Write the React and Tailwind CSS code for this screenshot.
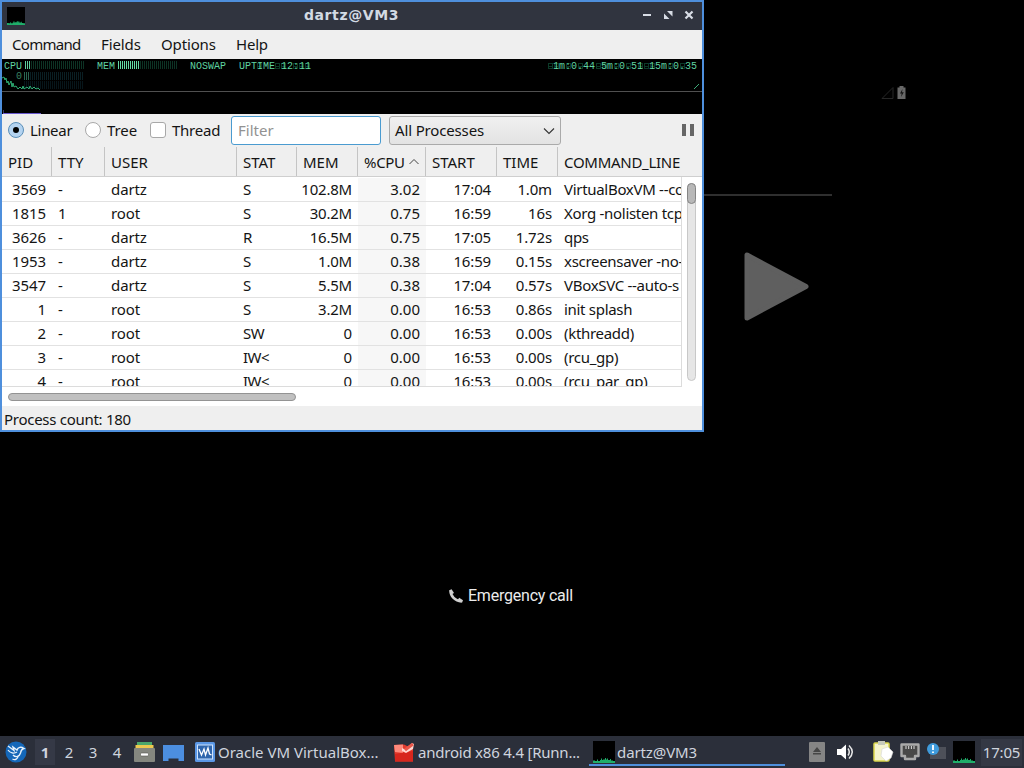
import clsx from 'clsx';

const columns = [
  { key: 'pid', label: 'PID', width: 'w-[50px]', align: 'text-right pr-[6px] tracking-[-0.05px]' },
  { key: 'tty', label: 'TTY', width: 'w-[53px]', align: 'pl-1.5' },
  { key: 'user', label: 'USER', width: 'w-[132px]', align: 'pl-1.5 tracking-[-0.1px]' },
  { key: 'stat', label: 'STAT', width: 'w-[60px]', align: 'pl-1.5 tracking-[-0.5px]' },
  { key: 'mem', label: 'MEM', width: 'w-[61px]', align: 'text-right pr-[6px] tracking-[-0.2px]' },
  { key: 'cpu', label: '%CPU', width: 'w-[68px]', align: 'text-right pr-[6px] bg-[#f7f7f7]' },
  { key: 'start', label: 'START', width: 'w-[71px]', align: 'text-right pr-[6px] tracking-[-0.15px]' },
  { key: 'time', label: 'TIME', width: 'w-[61px]', align: 'text-right pr-[6px] tracking-[-0.15px]' },
  { key: 'cmd', label: 'COMMAND_LINE', width: 'w-[124px]', align: 'pl-1.5 tracking-[-0.3px]' },
];

const processes = [
  { pid: '3569', tty: '-', user: 'dartz', stat: 'S', mem: '102.8M', cpu: '3.02', start: '17:04', time: '1.0m', cmd: 'VirtualBoxVM --co' },
  { pid: '1815', tty: '1', user: 'root', stat: 'S', mem: '30.2M', cpu: '0.75', start: '16:59', time: '16s', cmd: 'Xorg -nolisten tcp' },
  { pid: '3626', tty: '-', user: 'dartz', stat: 'R', mem: '16.5M', cpu: '0.75', start: '17:05', time: '1.72s', cmd: 'qps' },
  { pid: '1953', tty: '-', user: 'dartz', stat: 'S', mem: '1.0M', cpu: '0.38', start: '16:59', time: '0.15s', cmd: 'xscreensaver -no-' },
  { pid: '3547', tty: '-', user: 'dartz', stat: 'S', mem: '5.5M', cpu: '0.38', start: '17:04', time: '0.57s', cmd: 'VBoxSVC --auto-s' },
  { pid: '1', tty: '-', user: 'root', stat: 'S', mem: '3.2M', cpu: '0.00', start: '16:53', time: '0.86s', cmd: 'init splash' },
  { pid: '2', tty: '-', user: 'root', stat: 'SW', mem: '0', cpu: '0.00', start: '16:53', time: '0.00s', cmd: '(kthreadd)' },
  { pid: '3', tty: '-', user: 'root', stat: 'IW<', mem: '0', cpu: '0.00', start: '16:53', time: '0.00s', cmd: '(rcu_gp)' },
  { pid: '4', tty: '-', user: 'root', stat: 'IW<', mem: '0', cpu: '0.00', start: '16:53', time: '0.00s', cmd: '(rcu_par_gp)' },
];

const QpsIcon = ({ className }) => (
  <svg viewBox="0 0 22 22" className={className}>
    <rect width="22" height="22" fill="#000" />
    <path
      d="M0 22V19.5H2V20H4V18.5H5V20H7V19H8V17.5H9V19H10V18.5H12V17H13V18.5H14V17.5H15V19H17V18H18V19.5H20V20H22V22Z"
      fill="#1fae6a"
    />
  </svg>
);

const TitleBar = () => (
  <div className="relative flex h-7 items-center bg-[#30343f] pl-[5px] pr-[7px]">
    <QpsIcon className="-mt-px h-[18px] w-[18px]" />
    <span className="absolute inset-x-0 top-[3px] pr-[1px] text-center font-['DejaVu_Sans'] text-[14px] leading-5 font-bold tracking-[0.6px] text-[#d3dae3]">
      dartz@VM3
    </span>
    <svg className="-mt-0.5 ml-auto h-3 w-[54px]" viewBox="0 0 54 12">
      <path d="M2 6H10" stroke="#d8dde6" strokeWidth="2" />
      <path d="M26 2H31.5V7.5ZM23 4.5V10H28.5Z" fill="#d8dde6" />
      <path d="M44.5 2.5L51.5 9.5M51.5 2.5L44.5 9.5" stroke="#d8dde6" strokeWidth="2.2" />
    </svg>
  </div>
);

const MenuBar = () => (
  <div className="flex h-[29px] items-center bg-[#efefef] pb-0.5 pl-2.5">
    <span className="w-[89px] tracking-[-0.7px]">Command</span>
    <span className="w-[60px] tracking-[-0.1px]">Fields</span>
    <span className="w-[75px] tracking-[-0.15px]">Options</span>
    <span className="tracking-[-0.2px]">Help</span>
  </div>
);

const Bars = ({ x, y, count, lit, height, on, off }) =>
  Array.from({ length: count }, (_, i) => (
    <rect key={i} x={x + i * 2} y={y} width="1" height={height} fill={i < lit ? on : off} />
  ));

// unlit segments of the LED digits, one cell per x
const ghostCells = [255, 273, 279, 291, 297, 303, 546, 552, 564, 576, 594, 600, 612, 624, 636, 642, 648, 666, 678];
const GhostCells = () =>
  ghostCells.map((x) => (
    <path key={x} d={`M${x} 4.500H${x + 4}V9.500H${x}ZM${x} 7H${x + 4}`} fill="none" stroke="#0c3a28" />
  ));

const led = "absolute font-['Liberation_Mono'] text-[10px] leading-[10px] whitespace-pre text-[#5fd3a0]";

const LoadGraph = () => (
  <div className="relative h-[55px] overflow-hidden bg-black">
    <svg className="h-[55px] w-[700px]" viewBox="0 0 700 55" shapeRendering="crispEdges">
      <Bars x={23} y={2} count={30} lit={3} height={8} on="#5fcf9c" off="#0d3325" />
      <Bars x={116} y={2} count={30} lit={11} height={8} on="#63d9a4" off="#0d3325" />
      <Bars x={22} y={13} count={30} lit={3} height={8} on="#2a6650" off="#0a1f24" />
      <Bars x={22} y={22} count={30} lit={0} height={8} on="#2a6650" off="#07161b" />
      <GhostCells />
      <path
        d="M0 19L2 18L3 21L4 19L5 24L6 22L7 26L9 22L10 28L11 24L12 28L14 27L16 30L18 28L20 30L21 27L22 30L25 28L27 30L28 27L30 30L32 28L34 30L36 29L38 31"
        fill="none"
        stroke="#2fae74"
        shapeRendering="auto"
      />
      <path d="M692 30L693 29L697 25" fill="none" stroke="#3cab79" shapeRendering="auto" />
      <rect y="32" width="700" height="1" fill="#505050" />
      <rect x="1" y="54" width="38" height="1" fill="#6a5ad0" />
      <rect x="1" y="51" width="1" height="3" fill="#3b3566" />
    </svg>
    <span className={clsx(led, 'left-[2px] top-[3px]')}>CPU</span>
    <span className={clsx(led, 'left-[95px] top-[3px]')}>MEM</span>
    <span className={clsx(led, 'left-[188px] top-[3px]')}>NOSWAP</span>
    <span className={clsx(led, 'left-[237px] top-[3px]')}>UPTIME 12:11</span>
    <span className={clsx(led, 'right-[5px] top-[3px]')}>1m:0.44 5m:0.51 15m:0.35</span>
    <span className={clsx(led, 'left-[14px] top-[13px] opacity-60')}>0</span>
  </div>
);

const Toolbar = () => (
  <div className="flex h-[33px] items-center bg-[#efefef] pl-[6px]">
    <span className="-mt-0.5 flex h-4 w-4 items-center justify-center rounded-full border border-[#5b8fb8] bg-[#b4d3f0]">
      <span className="h-1.5 w-1.5 rounded-full bg-black" />
    </span>
    <span className="-mt-0.5 ml-1.5 w-[55px] tracking-[-0.3px]">Linear</span>
    <span className="-mt-0.5 h-4 w-4 rounded-full border border-[#a8a8a8] bg-white" />
    <span className="-mt-0.5 ml-1.5 w-[43px] tracking-[-0.1px]">Tree</span>
    <span className="-mt-0.5 h-4 w-4 rounded-[3px] border border-[#a8a8a8] bg-white" />
    <span className="-mt-0.5 ml-1.5 w-[59px] tracking-[-0.25px]">Thread</span>
    <div className="h-[29px] w-[150px] rounded-[3px] border border-[#4a9bd0] bg-white pl-1.5 leading-[26px] text-[#929292]">
      Filter
    </div>
    <div className="ml-2 flex h-[29px] w-[172px] items-center rounded-[3px] border border-[#aaa] bg-gradient-to-b from-[#f0f0f0] to-[#e3e3e3] px-[5px]">
      <span className="-mt-0.5 tracking-[-0.15px]">All Processes</span>
      <svg className="ml-auto h-2.5 w-3" viewBox="0 0 12 10">
        <path d="M1 2.5L6 7.5L11 2.5" fill="none" stroke="#333" strokeWidth="1.1" />
      </svg>
    </div>
    <div className="-mt-0.5 ml-auto mr-2 flex gap-1">
      <span className="h-3 w-1 bg-[#666]" />
      <span className="h-3 w-1 bg-[#666]" />
    </div>
  </div>
);

const ProcessTable = () => (
  <div className="h-[259px] bg-white">
    <div className="flex h-[30px] border-b border-[#cfcfcf] bg-[#efefef]">
      {columns.map((col, i) => (
        <div
          key={col.key}
          className={clsx(
            'flex shrink-0 items-center pl-1.5 pt-px whitespace-nowrap',
            col.width,
            i < columns.length - 1 && 'border-r border-[#c4c4c4]',
          )}
        >
          <span className={clsx(col.key === 'cmd' && 'tracking-[-0.28px]', col.key === 'cpu' && 'tracking-[-0.3px]')}>
            {col.label}
          </span>
          {col.key === 'cpu' && (
            <svg className="-mt-px ml-[3px] h-2.5 w-3 shrink-0" viewBox="0 0 12 10">
              <path d="M1.5 7L6 2.5L10.5 7" fill="none" stroke="#444" />
            </svg>
          )}
        </div>
      ))}
    </div>
    <div className="flex h-[210px]">
      <div className="w-[680px] overflow-hidden border-r border-b border-[#dcdcdc] pt-px">
        {processes.map((proc) => (
          <div key={proc.pid} className="flex h-6 border-b border-[#e2e2e2] leading-[22px]">
            {columns.map((col) => (
              <span key={col.key} className={clsx('shrink-0 whitespace-nowrap', col.width, col.align)}>
                {proc[col.key]}
              </span>
            ))}
          </div>
        ))}
      </div>
      <div className="ml-[5px] mt-[6px] h-[198px] w-[9px] rounded-full border border-[#c8c8c8] bg-[#e6e6e6]">
        <div className="-ml-px -mt-px h-[21px] w-[9px] rounded-full border border-[#858585] bg-[#b8b8b8]" />
      </div>
    </div>
    <div className="px-1.5 pt-[6px]">
      <div className="h-2 w-72 rounded-full border border-[#939393] bg-[#c0c0c0]" />
    </div>
  </div>
);

const QpsWindow = () => (
  <div className="absolute left-0 top-0 flex h-[432px] w-[704px] flex-col border-2 border-[#4e8fdc] bg-[#efefef]">
    <TitleBar />
    <MenuBar />
    <LoadGraph />
    <Toolbar />
    <ProcessTable />
    <div className="flex flex-1 items-center pl-[2px] pt-[2px] tracking-[-0.28px]">Process count: 180</div>
  </div>
);

const AndroidScreen = () => (
  <>
    <svg className="absolute left-[880px] top-[84px] h-4 w-7" viewBox="0 0 28 16">
      <path d="M2 14.5L13 3.5V14.5Z" fill="none" stroke="#262626" />
      <path d="M17.500 3.5H19.500V2H23.500V3.5H25.500V15H17.500Z" fill="#686868" />
      <path d="M22.5 5L20 9.5H21.7L21 13L23.8 8.3H22Z" fill="#161616" />
    </svg>
    <div className="absolute left-[704px] top-[194px] h-0.5 w-32 bg-[#2f2f2f]" />
    <svg className="absolute left-[740px] top-[248px] h-[78px] w-[72px]" viewBox="0 0 72 78">
      <path d="M7 7V70L66 38.5Z" fill="#5f5f5f" stroke="#5f5f5f" strokeWidth="5" strokeLinejoin="round" />
    </svg>
    <div className="absolute left-[447px] top-[586px] flex items-center font-['Roboto'] text-[16px] leading-5 text-[#ececec]">
      <svg className="mr-[3px] h-[18px] w-[18px]" viewBox="0 0 18 18">
        <path d="M3.500 3.500C3.500 9 8 14 14.500 14.500" fill="none" stroke="#cfcfcf" strokeWidth="2.600" />
        <path d="M2.200 3.200L4.600 2.200L7 6L4.400 7.600Z" fill="#cfcfcf" />
        <path d="M10.500 13.300L12.200 10.800L16 13.200L15 15.800Z" fill="#cfcfcf" />
      </svg>
      <span className="tracking-[-0.22px]">Emergency call</span>
    </div>
  </>
);

const Taskbar = () => (
  <div className="flex h-8 shrink-0 items-center bg-[#2b2f3a] text-[15px] text-[#cfd4de]">
    <svg className="ml-[5px] h-[22px] w-[22px] shrink-0" viewBox="0 0 22 22">
      <circle cx="11" cy="11" r="10.500" fill="#1467b8" />
      <path d="M3 5L9 9.500L8 6L12 9C13 6 16 5.500 19 7.500C16.500 8 16 9.500 15.500 12C14.500 15.500 11 17 8 14" fill="none" stroke="#e6f1fb" strokeWidth="1.400" />
      <path d="M3 9C5 12 9 13 12 11M13 15C13 18 10 19.500 7.500 18" fill="none" stroke="#e6f1fb" strokeWidth="1.300" />
    </svg>
    <div className="ml-2 flex text-center leading-8">
      <span className="mr-[2px] mt-[3px] h-[26px] w-5 bg-[#353946] font-bold leading-[27px]">1</span>
      <span className="w-6">2</span>
      <span className="w-6">3</span>
      <span className="w-6">4</span>
    </div>
    <svg className="ml-[5px] h-5 w-[21px] shrink-0" viewBox="0 0 21 20">
      <path d="M3 0H18V4H3Z" fill="#4aa76c" />
      <path d="M1.500 3H19.500V7H1.500Z" fill="#ecc94f" />
      <rect y="6" width="21" height="14" rx="1" fill="#85877f" />
      <rect x="6.500" y="11" width="8" height="3" rx="1" fill="#fff" stroke="#55564f" strokeWidth=".6" />
    </svg>
    <svg className="ml-2 h-[17px] w-[21px] shrink-0" viewBox="0 0 21 17">
      <path d="M0 1H21V17H15.500V14.500H5.500V17H0Z" fill="#4c8fe0" />
    </svg>
    <div className="ml-[11px] flex w-[199px] shrink-0 items-center">
      <svg className="mr-[3px] h-5 w-5 shrink-0" viewBox="0 0 20 20">
        <rect width="20" height="20" rx="1.500" fill="#5b98e6" />
        <rect x="2.500" y="3" width="15" height="14" fill="#2f66ad" stroke="#cfe3fb" />
        <path d="M4 7L6.500 13L9 7L10.500 13L13 6L14.500 12L16.500 13" fill="none" stroke="#fff" strokeWidth="1.300" />
      </svg>
      <span className="whitespace-nowrap">Oracle VM VirtualBox...</span>
    </div>
    <div className="flex w-[195px] shrink-0 items-center">
      <svg className="mr-[4px] h-5 w-5 shrink-0" viewBox="0 0 20 20">
        <path d="M0 3L10 2.500L19 7V19.500H1Z" fill="#e33a2d" />
        <path d="M0 3L9 2.500V11L1 10Z" fill="#ff8a7c" />
        <path d="M1 12L19 9V19.500H1Z" fill="#d7261d" />
        <path d="M8 6L12 8L18 1L20 2L19 7L12 11L8 9Z" fill="#ffd9d3" />
        <path d="M11 8L19 2" stroke="#e9574a" strokeWidth="3" />
      </svg>
      <span className="whitespace-nowrap tracking-[-0.22px]">android x86 4.4 [Runn...</span>
    </div>
    <div className="-mt-0.5 flex h-[30px] w-[196px] shrink-0 items-center border-b-2 border-[#4e8fdc] pl-1 pt-[3px]">
      <QpsIcon className="h-[22px] w-[22px]" />
      <span className="ml-[2px] tracking-[-0.1px]">dartz@VM3</span>
    </div>
    <svg className="ml-6 h-5 w-4 shrink-0" viewBox="0 0 16 20">
      <rect width="16" height="20" rx="1" fill="#858585" />
      <path d="M8 5L12 10H4ZM4 11H12V12.500H4Z" fill="#464646" />
    </svg>
    <svg className="ml-3 h-[18px] w-[18px] shrink-0" viewBox="0 0 18 18">
      <path d="M0 6H4L9 1.500V16.500L4 12H0Z" fill="#fff" />
      <path d="M11 5.500Q13.500 9 11 12.500M12 2.500Q18.500 9 12 15.500" fill="none" stroke="#e8e8e8" strokeWidth="1.500" />
    </svg>
    <svg className="ml-[18px] h-[22px] w-[21px] shrink-0" viewBox="0 0 21 22">
      <rect x="1" y="2" width="15" height="18" rx="1" fill="#f4f3ce" stroke="#dad64c" strokeWidth="1.500" />
      <rect x="5" y="0" width="7" height="4" fill="#c6c9bb" />
      <path d="M9 8L15 6L20 11L18 17L13 20L8 15Z" fill="#fff" stroke="#d7d7d7" strokeWidth=".6" />
    </svg>
    <svg className="ml-1.5 h-[18px] w-5 shrink-0" viewBox="0 0 20 18">
      <path d="M1.500 1.500H18.500V13H15V16H5V13H1.500Z" fill="#484848" stroke="#aaa" strokeWidth="2.400" strokeLinejoin="round" />
      <path d="M6 3V6M8.700 3V6M11.400 3V6M14 3V6" stroke="#ddd" />
    </svg>
    <svg className="ml-[7px] h-5 w-5 shrink-0" viewBox="0 0 20 20">
      <rect x="3" y="5" width="16" height="12" fill="#4d5059" />
      <circle cx="6" cy="7" r="6" fill="#3f9bdc" />
      <path d="M6 3V8M6 9.500V11" stroke="#fff" strokeWidth="1.800" />
    </svg>
    <QpsIcon className="ml-1.5 h-[22px] w-[22px] shrink-0" />
    <div className="ml-[6px] h-[27px] w-[41px] shrink-0 bg-[#343844] text-center leading-[26px] tracking-[-0.2px]">17:05</div>
  </div>
);

export default function App() {
  return (
    <div className="flex h-[768px] w-[1024px] flex-col overflow-hidden bg-black font-['Noto_Sans',sans-serif] text-[15px] leading-5 text-[#141414]">
      <div className="relative flex-1">
        <AndroidScreen />
        <QpsWindow />
      </div>
      <Taskbar />
    </div>
  );
}
